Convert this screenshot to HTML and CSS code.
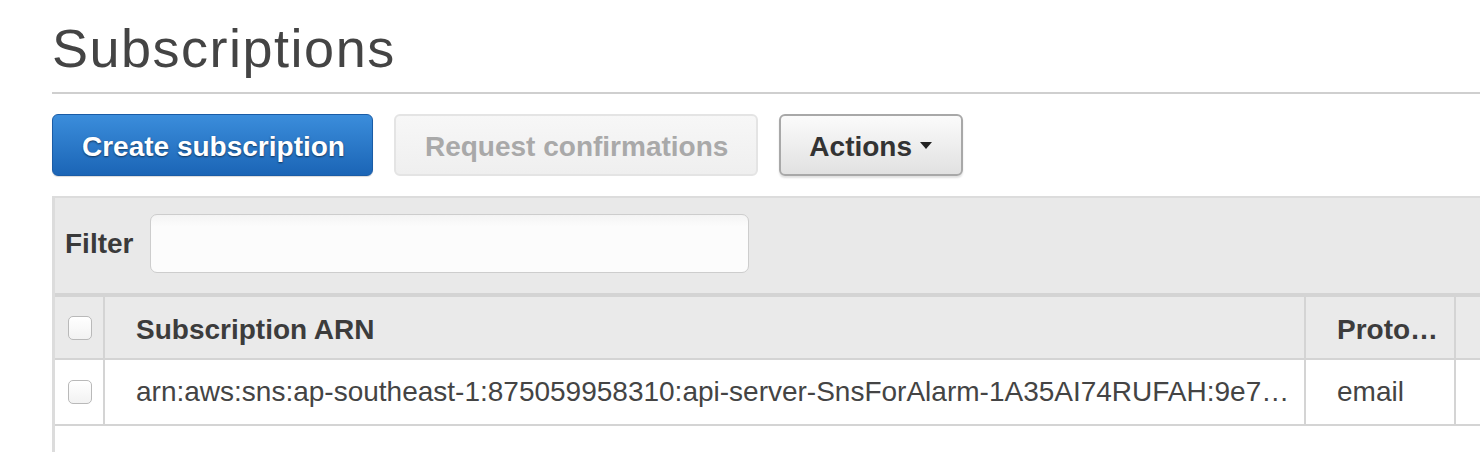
FILE: index.html
```html
<!DOCTYPE html>
<html>
<head>
<meta charset="utf-8">
<link rel="stylesheet" href="styles.css">
</head>
<body>
<div class="page">
  <h1 class="title">Subscriptions</h1>
  <div class="toolbar">
    <button class="btn btn-primary">Create subscription</button>
    <button class="btn btn-disabled">Request confirmations</button>
    <button class="btn btn-default">Actions <span class="caret"></span></button>
  </div>
  <div class="panel">
    <div class="filter">
      <label class="filter-label">Filter</label>
      <div class="filter-input"></div>
    </div>
    <div class="grid">
      <div class="row row-head">
        <div class="cell cell-check"><span class="checkbox"></span></div>
        <div class="cell cell-arn">Subscription ARN</div>
        <div class="cell cell-proto">Proto…</div>
        <div class="cell cell-rest"></div>
      </div>
      <div class="row row-data">
        <div class="cell cell-check"><span class="checkbox"></span></div>
        <div class="cell cell-arn">arn:aws:sns:ap-southeast-1:875059958310:api-server-SnsForAlarm-1A35AI74RUFAH:9e7…</div>
        <div class="cell cell-proto">email</div>
        <div class="cell cell-rest"></div>
      </div>
      <div class="empty"></div>
    </div>
  </div>
</div>
</body>
</html>
```

FILE: styles.css
```css
html, body {
  margin: 0;
  padding: 0;
  background: #fff;
  overflow: hidden;
}
body {
  font-family: "Liberation Sans", Arial, Helvetica, sans-serif;
  color: #444;
}
.page {
  padding-left: 52px;
}
.title {
  margin: 16px 0 0 0;
  font-size: 54px;
  line-height: 64px;
  font-weight: normal;
  letter-spacing: 1.5px;
  color: #444;
  padding-bottom: 12px;
  border-bottom: 2px solid #cfcfcf;
}
.toolbar {
  display: flex;
  gap: 21px;
  margin-top: 20px;
  height: 62px;
}
.btn {
  font-family: "Liberation Sans", Arial, Helvetica, sans-serif;
  font-size: 28px;
  font-weight: bold;
  height: 62px;
  border-radius: 6px;
  display: flex;
  align-items: center;
  gap: 8px;
  cursor: pointer;
}
.btn-primary {
  color: #fff;
  background: linear-gradient(#3b8ddb, #1b65b6);
  border: 1px solid #1a5ca6;
  text-shadow: 0 1px 2px rgba(0, 0, 0, 0.55);
  padding: 3px 27px 0 29px;
  box-shadow: 0 1px 1px rgba(0,0,0,0.15);
}
.btn-disabled {
  color: #a9a9a9;
  background: linear-gradient(#f7f7f7, #efefef);
  border: 2px solid #e4e4e4;
  padding: 3px 28px 0 29px;
}
.btn-default {
  color: #333;
  background: linear-gradient(#fbfbfb, #e1e1e1);
  border: 2px solid #a8a8a8;
  box-shadow: 0 2px 2px rgba(0, 0, 0, 0.12);
  padding: 3px 29px 0 28px;
}
.caret {
  display: inline-block;
  width: 0;
  height: 0;
  border-left: 6.5px solid transparent;
  border-right: 6.5px solid transparent;
  border-top: 7px solid #222;
  margin-top: -2px;
}
.panel {
  margin-top: 20px;
  border-top: 2px solid #dcdcdc;
  border-left: 3px solid #dcdcdc;
}
.filter {
  background: #e9e9e9;
  display: flex;
  align-items: center;
  padding: 16px 0 20px 10px;
}
.filter-label {
  font-size: 28px;
  font-weight: bold;
  color: #3a3a3a;
  width: 85px;
  flex-shrink: 0;
}
.filter-input {
  width: 597px;
  height: 57px;
  border: 1px solid #cdcdcd;
  border-radius: 7px;
  background: linear-gradient(#f4f4f4, #fcfcfc 20%);
  flex-shrink: 0;
}
.grid {
  border-top: 4px solid #d4d4d4;
  background: #fff;
}
.row {
  display: flex;
  border-bottom: 2px solid #d4d4d4;
}
.row-head {
  background: #eaeaea;
  height: 61px;
  font-weight: bold;
  color: #3c3c3c;
}
.row-data {
  background: #fff;
  height: 64px;
  color: #444;
}
.cell {
  font-size: 28px;
  display: flex;
  align-items: center;
  box-sizing: border-box;
  border-right: 2px solid #d4d4d4;
  white-space: nowrap;
  overflow: hidden;
  flex-shrink: 0;
}
.row-head .cell {
  padding-top: 4px;
}
.cell-check {
  width: 50px;
  padding-left: 13px;
}
.cell-arn {
  width: 1201px;
  padding-left: 31px;
  padding-right: 10px;
}
.cell-proto {
  width: 150px;
  padding-left: 31px;
}
.cell-rest {
  flex: 1 1 0;
  min-width: 0;
  border-right: none;
}
.checkbox {
  display: inline-block;
  width: 22px;
  height: 22px;
  border: 1px solid #b9b9b9;
  border-radius: 5px;
  background: linear-gradient(#fff, #f2f2f2);
}
.row-head .checkbox {
  margin-top: -4px;
}
.empty {
  height: 40px;
  background: #fff;
}
```
